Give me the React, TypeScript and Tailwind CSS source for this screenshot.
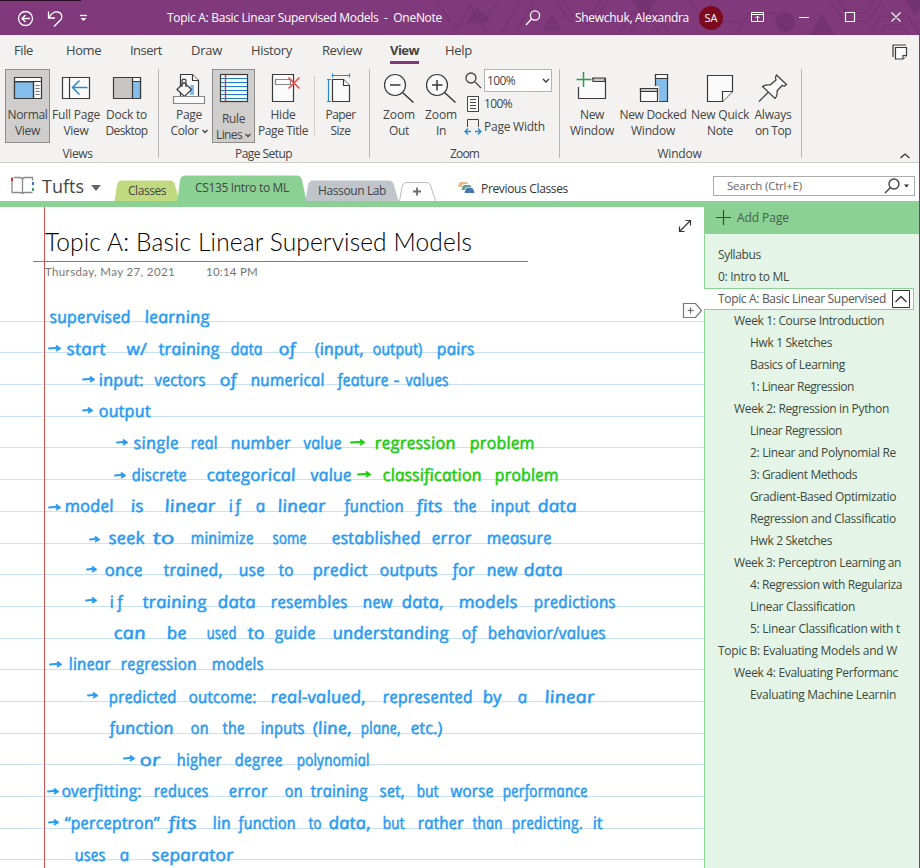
import { useLayoutEffect, useRef } from "react";
import type { ReactNode } from "react";

/* Single line of text whose letter spacing is adjusted to fill a given width. */
function Fit({ w, className = "", children }: { w: number; className?: string; children: string }) {
  const ref = useRef<HTMLSpanElement>(null);
  useLayoutEffect(() => {
    const el = ref.current;
    if (!el) return;
    el.style.letterSpacing = "0px";
    const natural = el.getBoundingClientRect().width;
    el.style.letterSpacing = `${(w - natural) / children.length}px`;
  }, [w, children]);
  return (
    <span className={`block shrink-0 whitespace-pre ${className}`} style={{ width: w }}>
      <span ref={ref} className="inline-block">{children}</span>
    </span>
  );
}

type Word = [string, number, number];
type InkLine = { y: number; words: Word[]; green?: Word[] };

const INK: InkLine[] = [
  { y: 322, words: [["supervised", 50, 131], ["learning", 145, 210]] },
  { y: 354, words: [["start", 67, 106], ["w/", 127, 147], ["training", 159, 220], ["data", 231, 263], ["of", 279, 296], ["(input,", 315, 364], ["output)", 373, 423], ["pairs", 437, 475]] },
  { y: 385.5, words: [["input:", 99, 144], ["vectors", 155, 206], ["of", 220, 237], ["numerical", 251, 325], ["feature", 338, 389], ["-", 394, 400], ["values", 406, 449]] },
  { y: 416.5, words: [["output", 99, 151]] },
  { y: 448, words: [["single", 134, 179], ["real", 191, 218], ["number", 231, 291], ["value", 304, 342]], green: [["regression", 375, 456], ["problem", 470, 535]] },
  { y: 480, words: [["discrete", 132, 187], ["categorical", 207, 296], ["value", 311, 352]], green: [["classification", 383, 482], ["problem", 495, 559]] },
  { y: 511.5, words: [["model", 65, 114], ["is", 131, 144], ["linear", 165, 216], ["if", 229, 241], ["a", 256, 267], ["linear", 278, 326], ["function", 345, 404], ["fits", 417, 443], ["the", 454, 477], ["input", 491, 530], ["data", 538, 577]] },
  { y: 543.5, words: [["seek", 109, 145], ["to", 153, 175], ["minimize", 191, 254], ["some", 273, 307], ["established", 332, 421], ["error", 432, 472], ["measure", 487, 552]] },
  { y: 575, words: [["once", 105, 143], ["trained,", 164, 223], ["use", 239, 265], ["to", 279, 294], ["predict", 313, 368], ["outputs", 380, 438], ["for", 453, 475], ["new", 487, 518], ["data", 524, 563]] },
  { y: 607, words: [["if", 110, 123], ["training", 143, 207], ["data", 218, 256], ["resembles", 271, 348], ["new", 363, 393], ["data,", 402, 444], ["models", 459, 518], ["predictions", 534, 616]] },
  { y: 638, words: [["can", 114, 146], ["be", 167, 187], ["used", 207, 237], ["to", 248, 265], ["guide", 275, 316], ["understanding", 333, 449], ["of", 462, 477], ["behavior/values", 488, 606]] },
  { y: 669.5, words: [["linear", 69, 111], ["regression", 121, 197], ["models", 212, 264]] },
  { y: 702, words: [["predicted", 109, 177], ["outcome:", 189, 257], ["real-valued,", 271, 366], ["represented", 383, 473], ["by", 483, 502], ["a", 518, 531], ["linear", 545, 595]] },
  { y: 733.5, words: [["function", 110, 174], ["on", 191, 209], ["the", 223, 245], ["inputs", 261, 305], ["(line,", 313, 352], ["plane,", 361, 401], ["etc.)", 411, 443]] },
  { y: 765, words: [["or", 140, 161], ["higher", 177, 222], ["degree", 235, 283], ["polynomial", 297, 370]] },
  { y: 796.5, words: [["overfitting:", 62, 142], ["reduces", 154, 209], ["error", 229, 268], ["on", 285, 303], ["training", 311, 368], ["set,", 380, 405], ["but", 417, 439], ["worse", 451, 494], ["performance", 503, 588]] },
  { y: 828.5, words: [["“perceptron”", 65, 160], ["fits", 169, 197], ["lin", 213, 231], ["function", 239, 296], ["to", 309, 322], ["data,", 329, 371], ["but", 383, 405], ["rather", 418, 464], ["than", 473, 503], ["predicting.", 512, 583], ["it", 593, 603]] },
  { y: 860, words: [["uses", 75, 106], ["a", 120, 132], ["separator", 152, 234]] },
];

const ARROWS: [number, number, number, string][] = [
  [49, 60, 348, "#2b9bf0"], [83, 94, 379, "#2b9bf0"], [83, 92, 410, "#2b9bf0"], [117, 127, 442, "#2b9bf0"],
  [351, 364, 442, "#1dcc10"], [115, 125, 475, "#2b9bf0"], [358, 370, 474, "#1dcc10"], [49, 60, 507, "#2b9bf0"],
  [90, 99, 539, "#2b9bf0"], [87, 96, 569, "#2b9bf0"], [86, 96, 600, "#2b9bf0"], [50, 61, 664, "#2b9bf0"],
  [88, 97, 695, "#2b9bf0"], [124, 134, 758, "#2b9bf0"], [48, 58, 791, "#2b9bf0"], [49, 58, 822, "#2b9bf0"],
];

const RULES = [321, 352, 384, 416, 447, 479, 511, 543, 574, 606, 638, 669, 701, 733, 764, 796, 828, 859];

function InkWord({ word, y, color }: { word: Word; y: number; color: string }) {
  const [t, a, b] = word;
  /* Narrow words would get fat stems if stretched, so only their spacing grows. */
  const narrow = t === "if" || t === "a";
  return (
    <text
      transform={`translate(${a + 0.5} ${y + 0.5}) skewX(11)`}
      textLength={b - a}
      lengthAdjust={narrow ? "spacing" : "spacingAndGlyphs"}
      fill={color}
      stroke={color}
      strokeWidth="0.5"
      strokeLinejoin="round"
      className="font-['Open_Sans',sans-serif] text-[17px] font-medium italic"
    >
      {t}
    </text>
  );
}

/* Ruled paper and pen ink; y values are window coordinates, shifted by the page's top edge. */
function Ink() {
  return (
    <svg className="absolute inset-0" width="704" height="661" viewBox="0 207 704 661">
      {RULES.map((y) => <rect key={y} x="0" y={y} width="704" height="1" fill="#c8e2f3" />)}
      <rect x="44" y="207" width="1" height="661" fill="#d9534f" />
      {ARROWS.map(([a, b, y, c], i) => (
        <path key={i} d={`M${a} ${y}.5Q${(a + b) / 2} ${y - 0.5} ${b} ${y + 0.5}M${b - 3.5} ${y - 2}L${b} ${y + 0.5}L${b - 3.5} ${y + 2.5}`} fill="none" stroke={c} strokeWidth="1.8" strokeLinecap="round" strokeLinejoin="round" />
      ))}
      {INK.map((l) => (
        <g key={l.y}>
          {l.words.map((w) => <InkWord key={w[1]} word={w} y={l.y} color="#2b9bf0" />)}
          {l.green?.map((w) => <InkWord key={w[1]} word={w} y={l.y} color="#1dcc10" />)}
        </g>
      ))}
    </svg>
  );
}

function TitleBar() {
  return (
    <header className="relative flex h-[35px] shrink-0 items-center overflow-hidden bg-[#80397b] text-[12px] text-white">
      <svg className="absolute inset-0" width="920" height="35" fill="none" stroke="#6f2f6c" strokeOpacity="0.4" strokeWidth="2">
        <rect width="81" height="1" fill="#2a0f28" stroke="none" />
        <path d="M436 0l16 24h30l16-24M452 35l18-30 18 30M500 35l20-33M514 35l20-33M556 0l14 22h24l14-22M563 0l10 15h18l10-15M618 35l14-22h24l14 22M628 35l9-14h15l9 14M690 0l12 18 12-18M715 22h50M735 35l14-22h26l14 22M830 0l14 21h24l14-21M838 0l9 13h18l9-13M868 35l12-19h28l12 19M880 35l7-10h16l6 10" />
        <path d="M478 8l14 14h-26zM552 14l10 17h-20zM632 0l12 20 12-20zM822 14l13 21h-26zM905 0l10 16 5-8V0z" fill="#6b2d68" fillOpacity="0.45" stroke="none" />
        <circle cx="785" cy="22" r="9" fill="#6b2d68" fillOpacity="0.45" />
      </svg>
      <div className="relative flex w-full items-center">
        <svg className="ml-4 shrink-0" width="74" height="35" fill="none" stroke="#fff" strokeWidth="1.3">
          <circle cx="9.500" cy="18.500" r="7" /><path d="M14 18.500H6m3.500-3.500L6 18.500l3.500 3.500" />
          <path d="M32.500 11.500v6.500h6.500M33 17.500c3-5 6-6 9-5.500 4 1 5 5 2.500 8l-6.500 6.500" />
          <path d="M64 15.500h7" /><path d="M64.500 18h6l-3 3z" fill="#fff" stroke="none" />
        </svg>
        <Fit w={275} className="ml-[77px]">Topic A: Basic Linear Supervised Models  -  OneNote</Fit>
        <svg className="ml-[83px] shrink-0" width="17" height="35" fill="none" stroke="#fff" strokeWidth="1.3"><circle cx="10" cy="15.500" r="4.600" /><path d="M6.500 19L1 25" /></svg>
        <Fit w={114} className="ml-[33px] pt-px">Shewchuk, Alexandra</Fit>
        <span className="ml-[10px] flex h-6 w-6 shrink-0 items-center justify-center rounded-full bg-[#7c0b20] text-[11px] leading-none"><Fit w={13}>SA</Fit></span>
        <svg className="ml-[27px] shrink-0" width="170" height="35" fill="none" stroke="#fff" strokeWidth="1">
          <path d="M1.500 12.500h12v9h-12zM1.500 14.500h12" /><path d="M7.500 21v-5M5.500 18l2-2 2 2" />
          <path d="M49 17.500h10M95.500 12.500h9v9h-9zM141.500 12.500l9 9m0-9l-9 9" strokeWidth="1.2" />
        </svg>
      </div>
    </header>
  );
}

function Menu() {
  return (
    <nav className="flex h-[34px] shrink-0 items-start pt-[6px] text-[13px] leading-[18px] text-[#444]">
      <Fit w={19} className="ml-[14px]">File</Fit>
      <Fit w={35} className="ml-[33px]">Home</Fit>
      <Fit w={32} className="ml-[29px]">Insert</Fit>
      <Fit w={31} className="ml-[29px]">Draw</Fit>
      <Fit w={41} className="ml-[29px]">History</Fit>
      <Fit w={40} className="ml-[30px]">Review</Fit>
      <span className="ml-[28px] h-[23px] shrink-0 border-b-[3px] border-[#80397b] font-bold"><Fit w={29}>View</Fit></span>
      <Fit w={27} className="ml-[26px]">Help</Fit>
      <svg className="ml-[420px] mt-[3px] shrink-0" width="16" height="16" fill="#fff" stroke="#3a3a3a" strokeWidth="1.2">
        <path d="M1 13V1h13" fill="none" /><path d="M3.500 3.500h11v8l-3.500 3.500h-7.500z" /><path d="M14.500 11.500H11v3.500" />
      </svg>
    </nav>
  );
}

function Btn({ width, icon, lines, active, low, caret }: { width: string; icon: ReactNode; lines: [string, number][]; active?: boolean; low?: boolean; caret?: boolean }) {
  return (
    <div className={`flex h-[74px] shrink-0 flex-col items-center ${width} ${active ? "border border-[#8f8d8b] bg-[#d0cecd]" : "border border-transparent"}`}>
      <div className={`flex shrink-0 justify-center ${low ? "h-[41px]" : "h-[37px]"}`}>{icon}</div>
      {lines.map(([t, w], i) => (
        <div key={t} className="flex h-4 shrink-0 items-center gap-[3px] leading-4">
          <Fit w={w}>{t}</Fit>
          {caret && i === 1 && <svg width="6" height="5" fill="none" stroke="#444" strokeWidth="1.3"><path d="M.5 1l2.500 2.500L5.500 1" /></svg>}
        </div>
      ))}
    </div>
  );
}

const ic = { width: 34, height: 34, fill: "#fafafa", stroke: "#3a3a3a", strokeWidth: 1.2, className: "shrink-0" } as const;

function Group({ label, w, width, children }: { label: string; w: number; width: string; children: ReactNode }) {
  return (
    <section className={`flex shrink-0 flex-col border-r border-[#b9b7b5] ${width}`}>
      <div className="flex h-[77px] shrink-0">{children}</div>
      <div className="flex justify-center pr-[8px] leading-[16px]"><Fit w={w}>{label}</Fit></div>
    </section>
  );
}

function Ribbon() {
  return (
    <div className="relative flex h-[94px] shrink-0 border-b border-[#cfcdcb] text-[12px] text-[#444]">
      <div className="flex h-[89px]">
        <Group label="Views" w={30} width="w-[159px] pl-[5px]">
          <Btn width="w-[45px]" active lines={[["Normal", 40], ["View", 25]]} icon={
            <svg {...ic}><path d="M3.500 7.500h27v21h-27z" /><path d="M3.500 12h19v16.500h-19z" fill="#83beec" /><path d="M3.500 11.500h27M22.500 12v16" /><path d="M24.500 15.500h4M24.500 18.500h4M24.500 21.500h4M24.500 24.500h4" stroke="#777" /></svg>} />
          <Btn width="w-[52px]" lines={[["Full Page", 48], ["View", 25]]} icon={
            <svg {...ic}><path d="M3.500 7.500h27v21h-27zM10.500 7.500v21" /><path d="M28.500 17.500H13.500m7-7l-7 7 7 7" fill="none" stroke="#2b88c9" strokeWidth="1.500" /></svg>} />
          <Btn width="w-[49px]" lines={[["Dock to", 41], ["Desktop", 42]]} icon={
            <svg {...ic}><path d="M3.500 7.500h27v21h-27z" fill="#c8c6c4" /><path d="M22.500 7.500h8v4h-8z" /><path d="M22.500 11.500h8v17h-8z" fill="#83beec" /></svg>} />
        </Group>
        <Group label="Page Setup" w={57} width="w-[211px] pl-[7px]">
          <Btn width="w-[46px]" caret lines={[["Page", 26], ["Color", 28]]} icon={
            <svg {...ic}><path d="M8.500 26V4.500h12l6 6V26" /><path d="M20.500 4.500v6h6" /><path d="M20 15v10" stroke="#83beec" strokeWidth="4" /><path d="M5 19.500l7-7 7.500 7-7 7z" /><path d="M10 17V11c0-2.500 4-2.500 4 0v6" fill="none" /><path d="M1.500 26.500h31v7h-31z" stroke="#888" /></svg>} />
          <Btn width="w-[43px]" active low caret lines={[["Rule", 23], ["Lines", 26]]} icon={
            <svg {...ic}><rect x="3.500" y="4.500" width="27" height="27" /><path d="M4 8.500h26M4 12.500h26M4 16.500h26M4 20.500h26M4 24.500h26M4 28.500h26" stroke="#1a7fd0" strokeWidth="1" /><path d="M8.500 5v26" stroke="#ee2f2f" strokeWidth="1.400" /></svg>} />
          <Btn width="w-[56px]" lines={[["Hide", 25], ["Page Title", 50]]} icon={
            <svg {...ic}><path d="M6.500 4.500h21v27h-21z" /><path d="M9.500 9.500h15v5h-15z" stroke="#888" /><path d="M22.500 7.500l11 11M33.500 7.500L22.500 18.500" stroke="#ee4a44" strokeWidth="1.500" /></svg>} />
          <i className="ml-[3px] mt-[7px] h-[59px] w-px bg-[#cfcdcb]" />
          <Btn width="w-[51px]" lines={[["Paper", 30], ["Size", 20]]} icon={
            <svg {...ic}><path d="M8.500 9.500h11l6 6v16h-17z" /><path d="M19.500 9.500v6h6" /><path d="M8.500 5.500h17M8.500 3.500v4M25.500 3.500v4M4.500 10v21M3 9.500h4M3 31.500h4" stroke="#2b88c9" /></svg>} />
        </Group>
        <Group label="Zoom" w={29} width="w-[190px] pl-[8px]">
          <Btn width="w-[42px]" lines={[["Zoom", 32], ["Out", 20]]} icon={
            <svg {...ic}><circle cx="13" cy="15" r="10.500" /><path d="M20.500 22.500l11 10M8 15h10.500" strokeWidth="1.500" /></svg>} />
          <Btn width="w-[42px]" lines={[["Zoom", 32], ["In", 10]]} icon={
            <svg {...ic}><circle cx="13" cy="15" r="10.500" /><path d="M20.500 22.500l11 10M8 15h10.500M13 10v10.500" strokeWidth="1.500" /></svg>} />
          <div className="ml-[2px] flex w-[90px] flex-col">
            <div className="flex h-[23px] items-center">
              <svg className="shrink-0" width="18" height="22" fill="none" stroke="#444" strokeWidth="1.300"><circle cx="7" cy="8" r="5" /><path d="M11 12l6 6" /></svg>
              <div className="ml-[2px] flex h-[23px] w-[68px] shrink-0 items-center border border-[#b5b3b1] bg-white pl-[2px]">
                <Fit w={28}>100%</Fit>
                <svg className="ml-[27px]" width="8" height="6" fill="none" stroke="#333" strokeWidth="1.300"><path d="M1 1l3 3 3-3" /></svg>
              </div>
            </div>
            <div className="flex h-[23px] items-center">
              <svg className="shrink-0" width="18" height="18" fill="#fff" stroke="#444"><path d="M3.500 1.500h11v15h-11z" /><path d="M6 4.500h6M6 7.500h6M6 10.500h6M6 13.500h6" /></svg>
              <Fit w={28} className="ml-[2px]">100%</Fit>
            </div>
            <div className="flex h-[23px] items-center">
              <svg className="shrink-0" width="18" height="18" fill="none" stroke="#444"><path d="M3.500 9V1.500h11V9" /><path d="M1 13.500h6M4 10.500l-3 3 3 3M11 13.500h6M14 10.500l3 3-3 3" stroke="#2b88c9" strokeWidth="1.300" /></svg>
              <Fit w={61} className="ml-[2px]">Page Width</Fit>
            </div>
          </div>
        </Group>
        <Group label="Window" w={44} width="w-[242px] pl-[6px]">
          <Btn width="w-[52px]" lines={[["New", 24], ["Window", 44]]} icon={
            <svg {...ic}><path d="M3.500 8.500h27v20h-27z" /><path d="M18 8h12v3.500H18z" fill="#c8c6c4" /><path d="M0 4h17v7H6v6H0z" fill="#f3f2f1" stroke="none" /><path d="M1.500 9.500h15M8.500 2v15" stroke="#2e9b46" strokeWidth="1.500" /></svg>} />
          <Btn width="w-[70px]" lines={[["New Docked", 67], ["Window", 44]]} icon={
            <svg {...ic}><path d="M19.500 4.500h12v27h-12z" fill="#83beec" /><path d="M19.500 4.500h12v4h-12z" /><path d="M3 16h20v17H3z" fill="#f3f2f1" stroke="none" /><path d="M4.500 18.500h17v13h-17z" /><path d="M4.500 18.500h17v3h-17z" fill="#c8c6c4" /></svg>} />
          <Btn width="w-[64px]" lines={[["New Quick", 58], ["Note", 26]]} icon={
            <svg {...ic}><path d="M4.500 5.500h25v16l-10 10h-15z" /><path d="M29.500 21.500h-10v10" /></svg>} />
          <Btn width="w-[42px]" lines={[["Always", 37], ["on Top", 36]]} icon={
            <svg {...ic}><path d="M3 31.500l9-9" /><path d="M20.500 5l10 9.500-2 1.500-2.500-.5-5 5.500c.5 3 .5 5-2 7.500L6.500 16.500c2.500-2 4.500-2 7.500-1.500l6-5-.5-3z" /></svg>} />
        </Group>
      </div>
      <svg className="absolute bottom-[2px] right-[8px]" width="12" height="8" fill="none" stroke="#333" strokeWidth="1.300"><path d="M1.500 6L6 2l4.500 4" /></svg>
    </div>
  );
}

function Tab({ width, height, fill, stroke, text, w, margin }: { width: number; height: number; fill: string; stroke?: string; text?: string; w?: number; margin: string }) {
  return (
    <div className={`relative flex shrink-0 items-center justify-center text-[12px] ${margin}`} style={{ width, height }}>
      <svg className="absolute inset-0" width={width} height={height}>
        <path d={`M.5 ${height}L3 5Q4 .5 8 .5H${width - 10}Q${width - 6} .5 ${width - 5} 5L${width - 0.5} ${height}`} fill={fill} stroke={stroke ?? "none"} />
        {!text && <path d="M14 9.500h8M18 5.500v8" stroke="#6b6b6b" strokeWidth="1.800" />}
      </svg>
      {text && w && <Fit w={w} className="relative">{text}</Fit>}
    </div>
  );
}

function TabRow() {
  return (
    <div className="flex h-[38px] shrink-0 items-end bg-white text-[#444]">
      <svg className="mb-[5px] ml-[11px] shrink-0" width="24" height="20" fill="none" stroke="#8a8a8a" strokeWidth="1.300">
        <path d="M3 1.500h6q2.500 0 2.500 2.500v14q0-1.500-2.500-1.500H1v-11M11.500 4q0-2.500 2.500-2.500h7.500v3M11.500 18q0-1.500 2.500-1.500h7.500" />
        <path d="M1 1.500v4" stroke="#c33c3c" strokeWidth="2" /><path d="M22 6v3" stroke="#3d73ad" strokeWidth="2" /><path d="M22 12v3" stroke="#4a9b7a" strokeWidth="2" />
      </svg>
      <Fit w={42} className="ml-[7px] pb-[3px] text-[18px] leading-[24px]">Tufts</Fit>
      <svg className="mb-[10px] ml-[7px] shrink-0" width="10" height="6"><path d="M0 0h10L5 6z" fill="#666" /></svg>
      <Tab width={66} height={21} fill="#c1da80" text="Classes" w={38} margin="ml-[13px]" />
      <Tab width={130} height={26} fill="#8ad193" text="CS135 Intro to ML" w={94} margin="-ml-[3px]" />
      <Tab width={94} height={21} fill="#c0c5cb" text="Hassoun Lab" w={68} margin="-ml-[2px]" />
      <Tab width={37} height={19} fill="#fff" stroke="#bbb" margin="ml-0" />
      <svg className="mb-[6px] ml-[22px] shrink-0" width="17" height="13">
        <path d="M0 5q1-5 3-5h5q2 0 2 2H5L3.500 5z" fill="#e6b98a" /><path d="M3.500 8q1-5 3-5h5q2 0 2 2.500H8L6.500 8z" fill="#6a9c8f" /><path d="M6.500 11q1-5 3-5h4q2 0 3 5z" fill="#4677ad" />
      </svg>
      <Fit w={87} className="mb-[4px] ml-[6px] text-[12px] leading-[16px] text-[#333]">Previous Classes</Fit>
      <div className="mb-[5px] ml-[145px] flex h-[20px] w-[202px] shrink-0 items-center border border-[#ababab] pl-[13px] text-[11.500px] text-[#666]">
        <Fit w={75}>Search (Ctrl+E)</Fit>
        <svg className="ml-[82px] shrink-0" width="26" height="18" fill="none" stroke="#444" strokeWidth="1.400"><circle cx="10" cy="7" r="5" /><path d="M6.500 10.500L1 16" /><path d="M20 7.500h5l-2.500 3z" fill="#333" stroke="none" /></svg>
      </div>
    </div>
  );
}

const PAGES: [string, number, number][] = [
  ["Syllabus", 43, 0], ["0: Intro to ML", 71, 0], ["Topic A: Basic Linear Supervised", 168, 0],
  ["Week 1: Course Introduction", 150, 1], ["Hwk 1 Sketches", 82, 2], ["Basics of Learning", 95, 2], ["1: Linear Regression", 104, 2],
  ["Week 2: Regression in Python", 155, 1], ["Linear Regression", 92, 2], ["2: Linear and Polynomial Re", 146, 2], ["3: Gradient Methods", 107, 2],
  ["Gradient-Based Optimizatio", 146, 2], ["Regression and Classificatio", 146, 2], ["Hwk 2 Sketches", 82, 2],
  ["Week 3: Perceptron Learning an", 167, 1], ["4: Regression with Regulariza", 152, 2], ["Linear Classification", 105, 2], ["5: Linear Classification with t", 150, 2],
  ["Topic B: Evaluating Models and W", 179, 0], ["Week 4: Evaluating Performanc", 164, 1], ["Evaluating Machine Learnin", 146, 2],
];

function Sidebar() {
  return (
    <aside className="flex w-[215px] shrink-0 flex-col bg-[#e4f4e6] text-[12px] text-[#3c4a3e]">
      <div className="flex h-[33px] shrink-0 items-center bg-[#8ad193] text-[#48604b]">
        <svg className="ml-[12px]" width="15" height="15" stroke="#444" strokeWidth="1.200"><path d="M0 7.500h15M7.500 0v15" /></svg>
        <Fit w={52} className="ml-[6px]">Add Page</Fit>
      </div>
      <ul className="flex grow flex-col">
        <li className="h-[10px] border-l border-[#8ad193]" />
        {PAGES.map(([t, w, d], i) => (
          <li key={i} className={`flex h-[22px] shrink-0 items-center ${i === 2 ? "mr-[5px] border border-l-0 border-[#8ad193] bg-white pl-[14px] text-[#555]" : "border-l border-[#8ad193]"} ${i !== 2 && d === 0 ? "pl-[13px]" : ""} ${d === 1 ? "pl-[29px]" : ""} ${d === 2 ? "pl-[45px]" : ""}`}>
            <Fit w={w}>{t}</Fit>
            {i === 2 && <svg className="ml-[6px] shrink-0" width="18" height="18" fill="none" stroke="#333"><path d="M.5.5h17v17H.5z" /><path d="M3.500 12L9 6.500l5.500 5.500" strokeWidth="1.300" /></svg>}
          </li>
        ))}
        <li className="grow border-l border-[#8ad193]" />
      </ul>
    </aside>
  );
}

export default function App() {
  return (
    <div className="flex h-[868px] w-[920px] flex-col overflow-hidden bg-[#f3f2f1] font-['Open_Sans',sans-serif] [font-stretch:92%]">
      <TitleBar />
      <div className="flex grow flex-col border-r border-[#80397b]">
        <Menu />
        <Ribbon />
        <TabRow />
        <div className="flex grow">
          <main className="flex w-[704px] shrink-0 flex-col border-t-[6px] border-[#8ad193] bg-white">
            <div className="relative grow">
              <Ink />
              <div className="relative flex items-start">
                <div className="ml-[33px] w-[495px]">
                  <h1 className="h-[55px] border-b border-[#7f7f7f] pl-[12px] pt-[20px] font-['Lato',sans-serif] text-[24.500px] font-light leading-[30px] text-black"><Fit w={427}>Topic A: Basic Linear Supervised Models</Fit></h1>
                  <div className="flex pl-[12px] pt-[3px] font-['Lato',sans-serif] text-[11.500px] leading-[14px] text-[#767676]">
                    <Fit w={130}>Thursday, May 27, 2021</Fit>
                    <Fit w={52} className="ml-[31px]">10:14 PM</Fit>
                  </div>
                </div>
                <svg className="ml-[148px] mt-[10px] shrink-0" width="28" height="105" fill="none" stroke="#333" strokeWidth="1.200">
                  <path d="M3.500 14.500L14.500 3.500M9.500 3.500h5v5M3.500 9.500v5h5" />
                  <path d="M7.500 86.500h12l6 7-6 7h-12z" fill="#fff" stroke="#777" /><path d="M11.500 93.500h6M14.500 90.500v6" stroke="#666" />
                </svg>
              </div>
            </div>
          </main>
          <Sidebar />
        </div>
      </div>
    </div>
  );
}
